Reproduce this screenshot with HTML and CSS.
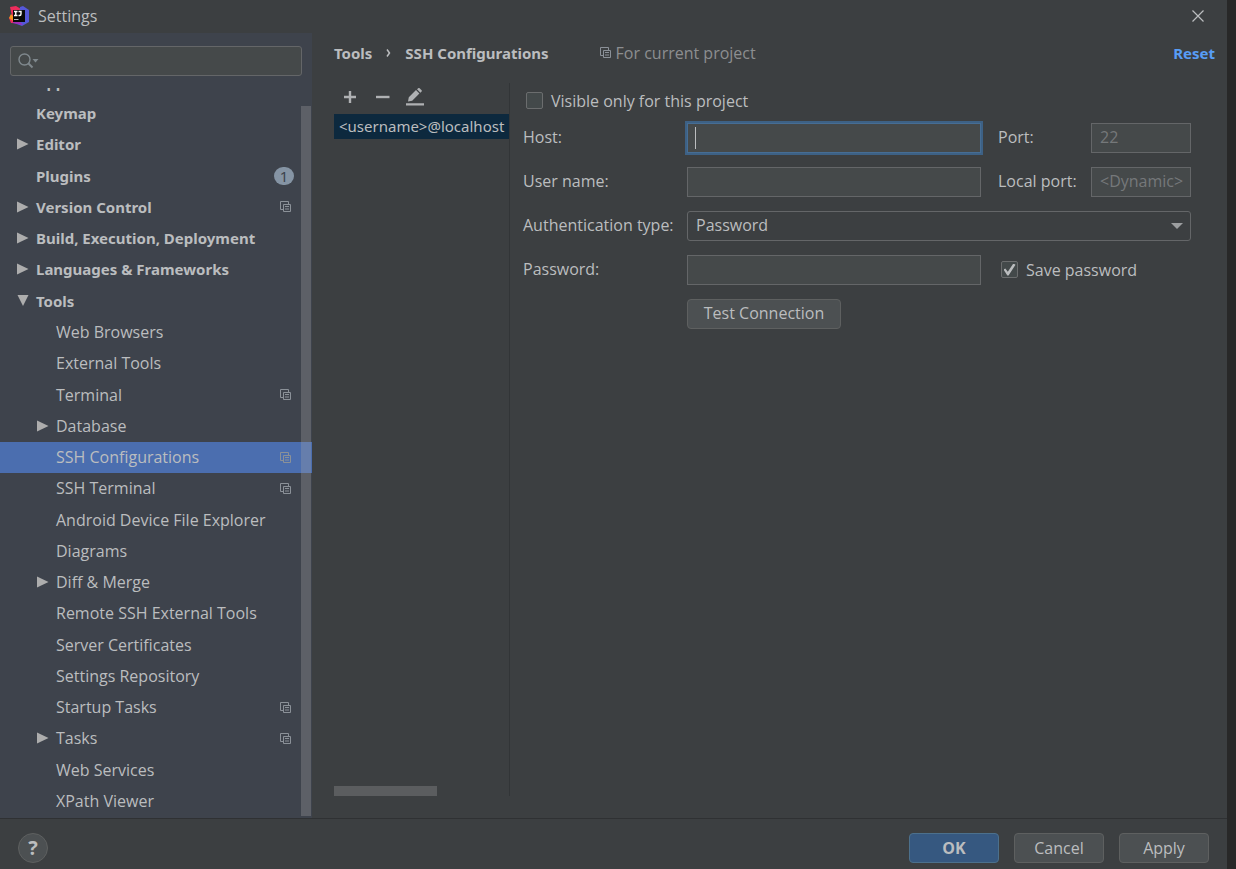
FILE: index.html
```html
<!DOCTYPE html>
<html lang="en">
<head>
<meta charset="utf-8">
<title>Settings</title>
<link rel="stylesheet" href="styles.css">
</head>
<body>
<svg class="defs" width="0" height="0" aria-hidden="true">
  <symbol id="copy" viewBox="0 0 11 11"><path d="M3 8.500H.5v-8h8V3M3.500 3.500h7v7h-7zM5 5.500h4M5 8h4" fill="none" stroke="currentColor"/></symbol>
  <symbol id="closed" viewBox="0 0 12 12"><path d="M0 .5L11.500 6L0 11.500z" fill="currentColor"/></symbol>
  <symbol id="open" viewBox="0 0 12 12"><path d="M.5 0h11L6 11z" fill="currentColor"/></symbol>
</svg>
<div class="dialog">
  <header class="titlebar">
    <svg class="logo" viewBox="0 0 20 20" aria-hidden="true">
      <path d="M1 1l6-1 5 3-2 14H2L0 12l3-2z" fill="#ee2c5c"/>
      <path d="M0 12l2-4 3 3-1 4z" fill="#f7941e"/>
      <path d="M11 1l3-1 6 4v12l-7 4-8-3 5-5z" fill="#5558d9"/>
      <path d="M3 17l6-3 5 5-5-1z" fill="#a22bb8"/>
      <path d="M4 4h12v12H4z" fill="#090909"/>
      <path d="M5 5.500h3.500M6.750 5.500v4M5 9.500h3.500M9.500 5.500h2.500v2.500q0 1.500-1.500 1.500H9.500" fill="none" stroke="#fff" stroke-width="1.400"/>
      <path d="M5 13.500h4.500" stroke="#bbb"/>
    </svg>
    <h1 class="title">Settings</h1>
    <button class="close" aria-label="Close"><svg width="12" height="12" viewBox="0 0 12 12"><path d="M.5.5l11 11M11.500.5l-11 11" stroke="currentColor" stroke-width="1.200"/></svg></button>
  </header>
  <div class="main">
    <aside class="sidebar">
      <div class="search">
        <svg width="22" height="16" viewBox="0 0 22 16" aria-hidden="true"><circle cx="6.500" cy="6.500" r="5.500" fill="none" stroke="currentColor" stroke-width="1.400"/><path d="M10.500 10.500l4 4" stroke="currentColor" stroke-width="2"/><path d="M14.500 6h6L17.500 9.500z" fill="currentColor"/></svg>
        <input class="search-input" type="text" aria-label="Search settings">
      </div>
      <nav class="tree" aria-label="Settings categories">
        <div class="row top cut"><span class="arrow"></span><span class="name">Appearance &amp; Behavior</span></div>
        <div class="row top"><span class="arrow"></span><span class="name">Keymap</span></div>
        <div class="row top"><svg class="arrow"><use href="#closed"/></svg><span class="name">Editor</span></div>
        <div class="row top"><span class="arrow"></span><span class="name">Plugins</span><span class="badge">1</span></div>
        <div class="row top"><svg class="arrow"><use href="#closed"/></svg><span class="name">Version Control</span><svg class="copy"><use href="#copy"/></svg></div>
        <div class="row top"><svg class="arrow"><use href="#closed"/></svg><span class="name">Build, Execution, Deployment</span></div>
        <div class="row top"><svg class="arrow"><use href="#closed"/></svg><span class="name">Languages &amp; Frameworks</span></div>
        <div class="row top"><svg class="arrow"><use href="#open"/></svg><span class="name">Tools</span></div>
        <div class="row"><span class="arrow"></span><span class="name">Web Browsers</span></div>
        <div class="row"><span class="arrow"></span><span class="name">External Tools</span></div>
        <div class="row"><span class="arrow"></span><span class="name">Terminal</span><svg class="copy"><use href="#copy"/></svg></div>
        <div class="row"><svg class="arrow"><use href="#closed"/></svg><span class="name">Database</span></div>
        <div class="row selected"><span class="arrow"></span><span class="name">SSH Configurations</span><svg class="copy"><use href="#copy"/></svg></div>
        <div class="row"><span class="arrow"></span><span class="name">SSH Terminal</span><svg class="copy"><use href="#copy"/></svg></div>
        <div class="row"><span class="arrow"></span><span class="name">Android Device File Explorer</span></div>
        <div class="row"><span class="arrow"></span><span class="name">Diagrams</span></div>
        <div class="row"><svg class="arrow"><use href="#closed"/></svg><span class="name">Diff &amp; Merge</span></div>
        <div class="row"><span class="arrow"></span><span class="name">Remote SSH External Tools</span></div>
        <div class="row"><span class="arrow"></span><span class="name">Server Certificates</span></div>
        <div class="row"><span class="arrow"></span><span class="name">Settings Repository</span></div>
        <div class="row"><span class="arrow"></span><span class="name">Startup Tasks</span><svg class="copy"><use href="#copy"/></svg></div>
        <div class="row"><svg class="arrow"><use href="#closed"/></svg><span class="name">Tasks</span><svg class="copy"><use href="#copy"/></svg></div>
        <div class="row"><span class="arrow"></span><span class="name">Web Services</span></div>
        <div class="row"><span class="arrow"></span><span class="name">XPath Viewer</span></div>
        <div class="scroll-thumb"></div>
      </nav>
    </aside>
    <main class="content">
      <div class="crumbs">
        <span class="crumb">Tools</span>
        <svg width="5" height="8" viewBox="0 0 5 8" aria-hidden="true"><path d="M1 .5L3.500 4L1 7.500" fill="none" stroke="currentColor" stroke-width="1.500"/></svg>
        <span class="crumb">SSH Configurations</span>
        <span class="scope"><svg class="copy"><use href="#copy"/></svg>For current project</span>
        <a class="reset" href="#reset">Reset</a>
      </div>
      <div class="panes">
        <section class="configs">
          <div class="toolbar">
            <button class="tool" aria-label="Add"><svg width="14" height="14" viewBox="0 0 14 14"><path d="M7 1v12M1 7h12" stroke="currentColor" stroke-width="2.400"/></svg></button>
            <button class="tool" aria-label="Remove"><svg width="14" height="14" viewBox="0 0 14 14"><path d="M0 7h13.500" stroke="currentColor" stroke-width="2.400"/></svg></button>
            <button class="tool" aria-label="Edit"><svg width="18" height="18" viewBox="0 0 18 18"><path d="M0 15.200h18v2.300H0zM2 13.500l.8-4.200 7.200-7.200 3.400 3.400-7.200 7.200zM11 1.300L12.200.2q.7-.5 1.400 0l2 2q.5.700 0 1.300L14.400 4.700z" fill="currentColor"/></svg></button>
          </div>
          <div class="config">&lt;username&gt;@localhost</div>
          <div class="h-thumb"></div>
        </section>
        <form class="form">
          <label class="check"><input class="box" type="checkbox"><span>Visible only for this project</span></label>
          <label for="host">Host:</label>
          <div class="host"><input class="field focused" id="host" type="text"><span class="caret"></span></div>
          <label for="port">Port:</label>
          <input class="field" id="port" type="text" placeholder="22">
          <label for="user">User name:</label>
          <input class="field" id="user" type="text">
          <label for="local">Local port:</label>
          <input class="field" id="local" type="text" placeholder="&lt;Dynamic&gt;">
          <label for="auth">Authentication type:</label>
          <div class="select-wrap">
            <select class="select" id="auth"><option>Password</option></select>
            <svg class="chevron" viewBox="0 0 12 6" aria-hidden="true"><path d="M0 0h12L6 6z" fill="currentColor"/></svg>
          </div>
          <label for="pass">Password:</label>
          <input class="field" id="pass" type="password">
          <label class="save"><input class="box" type="checkbox" checked><span>Save password</span></label>
          <button class="button test" type="button">Test Connection</button>
        </form>
      </div>
    </main>
  </div>
  <footer class="footer">
    <button class="help" aria-label="Help">?</button>
    <button class="button primary">OK</button>
    <button class="button">Cancel</button>
    <button class="button">Apply</button>
  </footer>
</div>
</body>
</html>
```
FILE: styles.css
```css
* { box-sizing: border-box; }

body {
  margin: 0;
  padding-right: 9px;
  background: #282828;
  color: #bbbdbf;
  font: 16px/20px "Open Sans", "Noto Sans", sans-serif;
}

button, input, select {
  margin: 0;
  color: inherit;
  font: inherit;
}

.defs { position: absolute; }

.dialog {
  display: flex;
  flex-direction: column;
  min-height: 100vh;
  background: #3c3f41;
}

.titlebar {
  display: flex;
  align-items: center;
  gap: 9px;
  height: 33px;
  padding: 0 20px 2px 9px;
}

.logo { width: 20px; height: 20px; }
.title { margin: 0; font-size: 16px; font-weight: 400; line-height: 20px; }

.close {
  display: flex;
  margin-left: auto;
  padding: 3px;
  border: 0;
  background: none;
}

.main { display: flex; flex: 1; }

.sidebar {
  display: flex;
  flex-direction: column;
  width: 312px;
  background: #3e434c;
}

.search {
  display: flex;
  align-items: center;
  height: 30px;
  margin: 13px 10px 12px;
  padding: 0 7px;
  border: 1px solid #646668;
  border-radius: 3px;
  background: #45494a;
  color: #7f888d;
}

.search-input {
  flex: 1;
  min-width: 0;
  border: 0;
  outline: 0;
  background: none;
}

.tree {
  position: relative;
  display: flex;
  flex: 1;
  flex-direction: column;
  padding-bottom: 1px;
}

.row {
  display: flex;
  flex: 1;
  align-items: center;
  gap: 7px;
  min-height: 31px;
  padding: 0 21px 1px 37px;
}

.row.top {
  padding-left: 17px;
  font-family: "Noto Sans", sans-serif;
  font-size: 15px;
  font-weight: 700;
}

.row.cut {
  flex: none;
  align-items: flex-end;
  height: 10px;
  min-height: 0;
  overflow: hidden;
  line-height: 30px;
}

.row.selected { background: #4b6eaf; }
.arrow { flex: none; width: 12px; height: 12px; color: #adadad; }
.name { flex: 1; white-space: nowrap; }
.copy { flex: none; width: 11px; height: 11px; color: #8b9198; }

.badge {
  width: 20px;
  height: 18px;
  margin-right: -3px;
  border-radius: 9px;
  background: #8594a4;
  color: #3e434c;
  font-weight: 400;
  line-height: 18px;
  text-align: center;
}

.scroll-thumb {
  position: absolute;
  top: 18px;
  right: 1px;
  bottom: 2px;
  width: 10px;
  background: rgba(166, 166, 166, 0.3);
}

.content {
  display: flex;
  flex: 1;
  flex-direction: column;
  min-width: 0;
  padding: 9px 12px 22px 22px;
}

.crumbs {
  display: flex;
  align-items: center;
  gap: 14px;
  height: 21px;
}

.crumb, .reset { font-family: "Noto Sans", sans-serif; font-size: 15px; font-weight: 700; }
.scope { display: flex; align-items: center; gap: 5px; margin-left: 37px; color: #8c8e90; }
.reset { margin-left: auto; color: #589df6; text-decoration: none; }

.panes { display: flex; flex: 1; margin-top: 20px; }

.configs {
  display: flex;
  flex-direction: column;
  width: 176px;
  border-right: 1px solid #323537;
}

.toolbar {
  display: flex;
  align-items: center;
  gap: 19px;
  height: 31px;
  padding: 0 9px 3px;
}

.tool {
  display: flex;
  padding: 0;
  border: 0;
  background: none;
  color: #afb1b3;
}

.tool:last-child { margin-left: -3px; }

.config {
  height: 25px;
  padding-left: 5px;
  overflow: hidden;
  background: #0d293e;
  font-family: "Noto Sans", sans-serif;
  font-size: 15px;
  line-height: 25px;
  white-space: nowrap;
}

.h-thumb {
  width: 103px;
  height: 10px;
  margin-top: auto;
  background: #5b5d5f;
}

.form {
  display: grid;
  flex: 1;
  grid-template-columns: 164px minmax(0, 1fr) 93px 100px;
  gap: 14px 0;
  align-content: start;
  align-items: center;
  padding: 8px 24px 0 13px;
}

.form > label { padding-bottom: 2px; }
.check, .save { display: flex; align-items: center; gap: 8px; }
.form > .check { grid-column: 1 / -1; height: 20px; margin: 0 3px -2px; padding-bottom: 1px; }
.form > .save { grid-column: 3 / -1; margin-left: 3px; padding-bottom: 1px; }
.host { position: relative; }
.host, #user, #pass { margin-right: 17px; }

.field {
  width: 100%;
  height: 30px;
  padding: 0 0 2px 8px;
  border: 1px solid #646668;
  outline: 0;
  background: #45494a;
}

.field::placeholder { color: #75787a; opacity: 1; }
#user, #pass { width: auto; }
.focused { border-color: #466d94; box-shadow: 0 0 0 2px #3d6185; }

.caret {
  position: absolute;
  top: 4px;
  left: 8px;
  width: 1px;
  height: 22px;
  background: #bbbdbf;
}

.select-wrap { position: relative; grid-column: 2 / -1; }

.select {
  display: block;
  width: 100%;
  height: 30px;
  padding: 0 8px 2px;
  border: 1px solid #646668;
  border-radius: 3px;
  appearance: none;
  background: #3c3f41;
}

.chevron {
  position: absolute;
  top: 12px;
  right: 8px;
  width: 12px;
  height: 6px;
  color: #9c9ea0;
  pointer-events: none;
}

.box {
  display: grid;
  place-content: center;
  width: 17px;
  height: 17px;
  border: 1px solid #6b6d6e;
  border-radius: 2px;
  appearance: none;
  background: #43494a;
}

.box:checked::before {
  width: 12px;
  height: 12px;
  background: #bbbdbf;
  clip-path: polygon(0 50%, 15% 42%, 36% 68%, 82% 0, 100% 10%, 42% 100%, 32% 100%);
  content: "";
}

.button {
  width: 90px;
  height: 30px;
  padding: 0;
  border: 1px solid #5e6060;
  border-radius: 4px;
  background: #4c5052;
}

.button.test { grid-column: 2; width: 154px; padding-bottom: 2px; }
.button.primary { margin-left: auto; border-color: #4c708c; background: #365880; font-weight: 700; }

.footer {
  display: flex;
  align-items: center;
  gap: 15px;
  height: 51px;
  padding: 8px 18px 0;
  border-top: 1px solid #2f3133;
}

.help {
  width: 30px;
  height: 30px;
  padding: 0;
  border: 1px solid #5e6060;
  border-radius: 50%;
  background: #4c5052;
  font-size: 20px;
  font-weight: 700;
}
```
